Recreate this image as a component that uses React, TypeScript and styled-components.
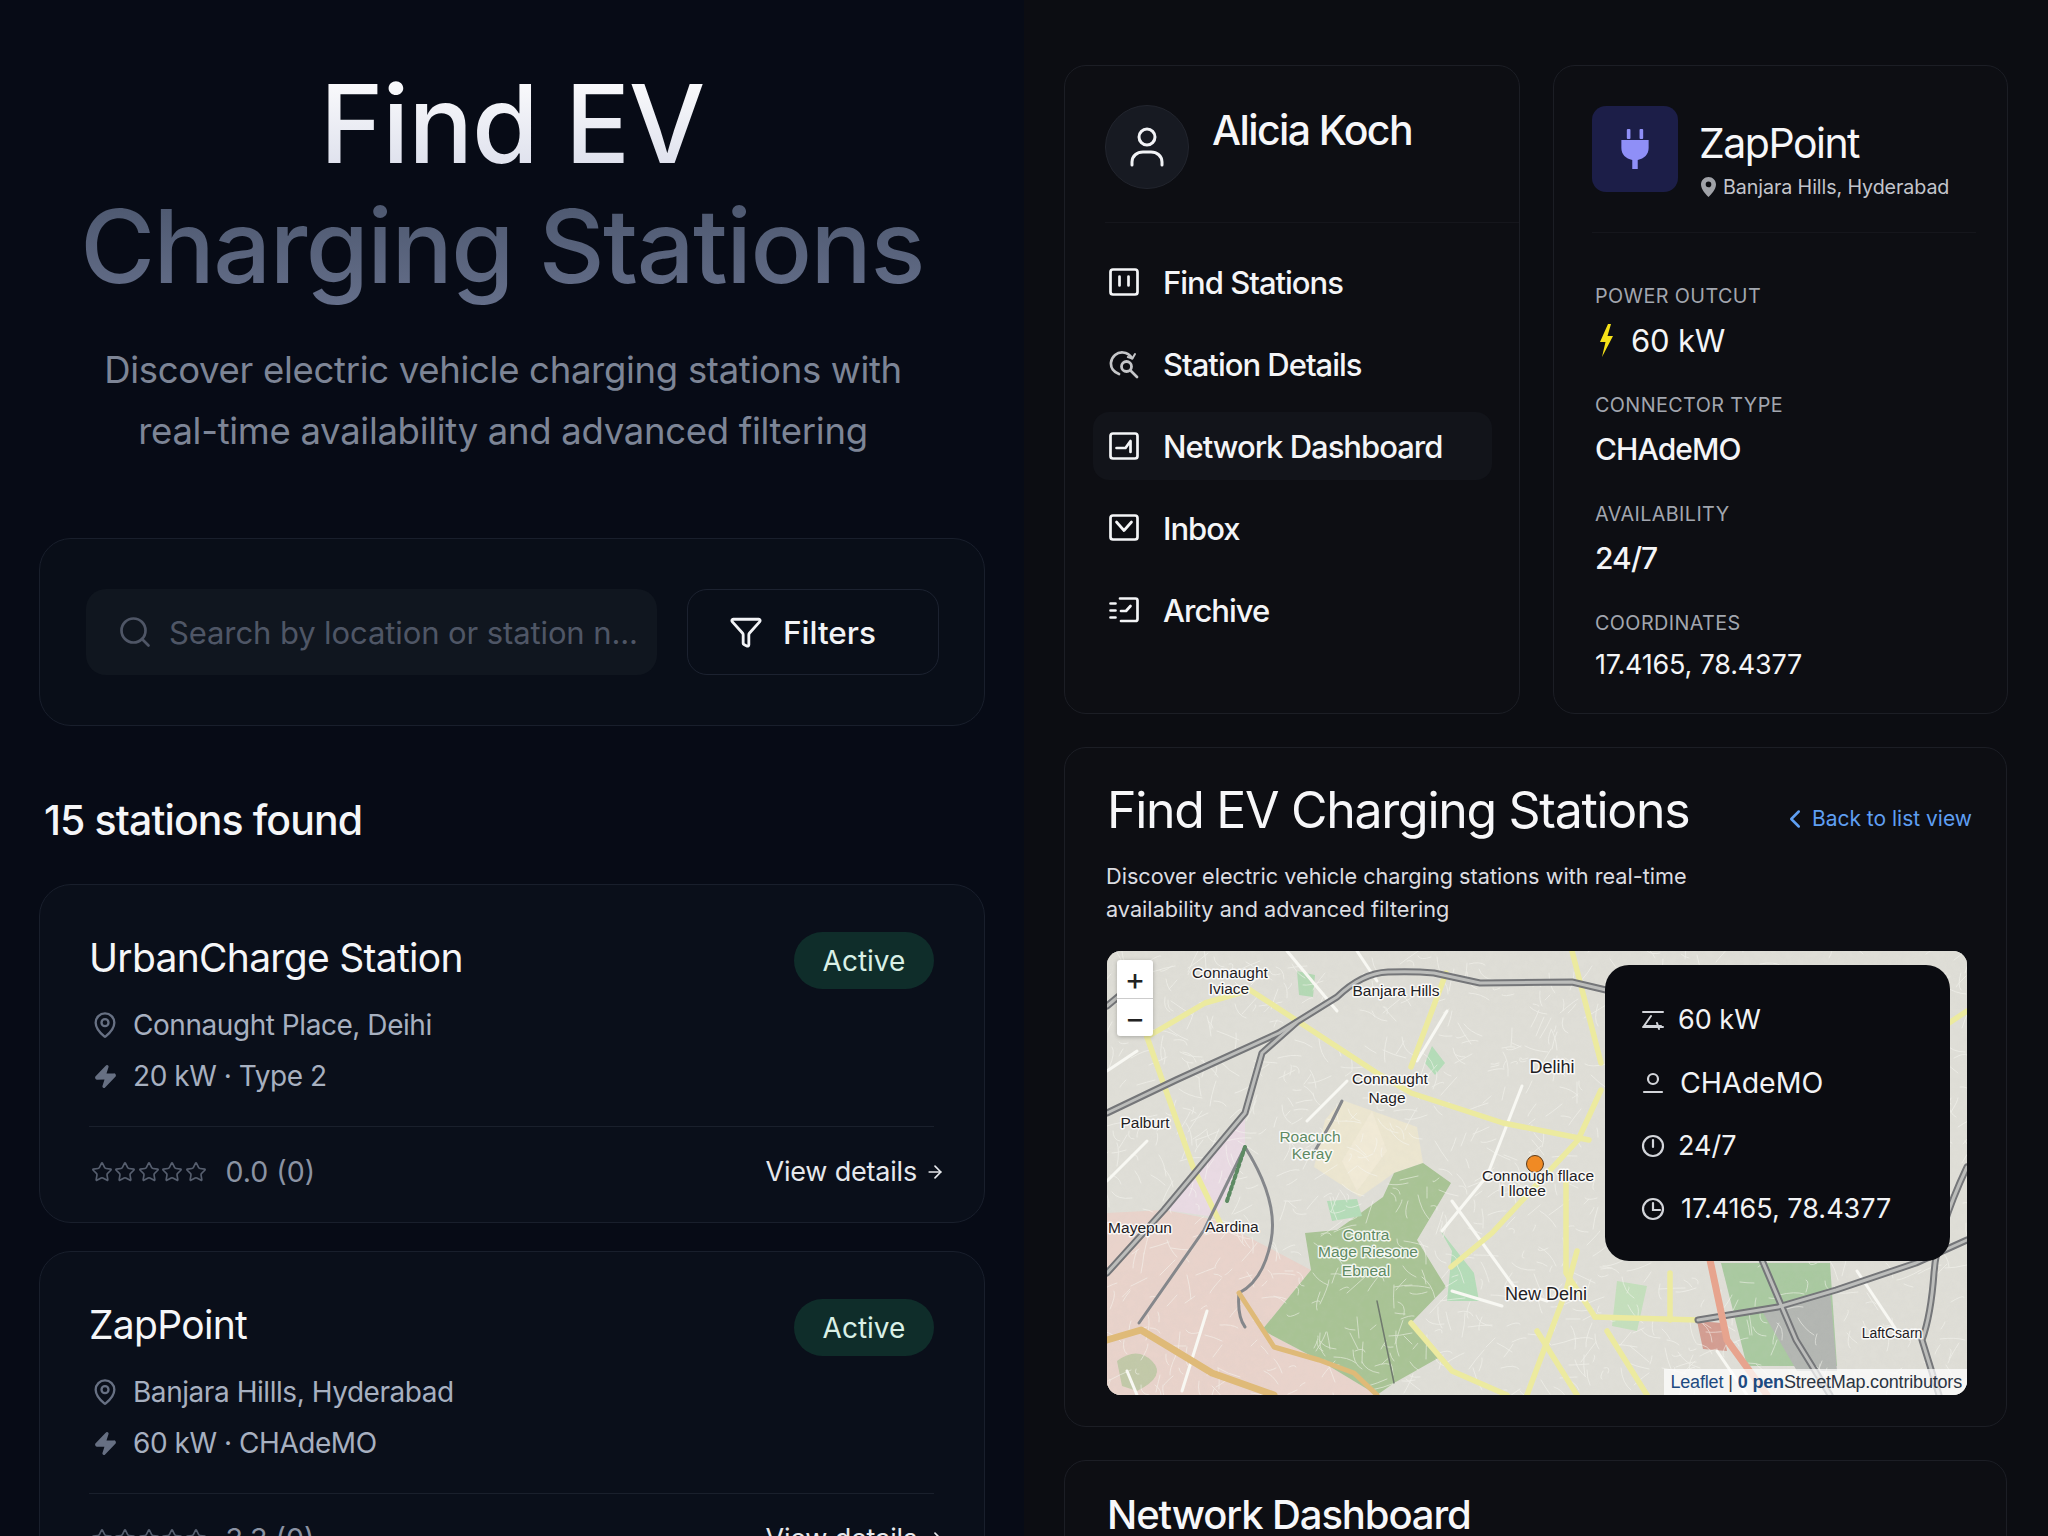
import React from 'react';
import styled, { createGlobalStyle } from 'styled-components';
import { Search, Funnel, MapPin, Zap, Star, ArrowRight, ChevronLeft } from 'lucide-react';

const GlobalStyle = createGlobalStyle`
  html, body {
    margin: 0;
    padding: 0;
    height: 1536px;
    overflow: hidden;
    background: #0c0d12;
    font-family: 'Inter', 'Liberation Sans', sans-serif;
  }
  * { box-sizing: border-box; }
`;

const Page = styled.div`
  display: grid;
  grid-template-columns: 1024px 1024px;
  height: 1536px;
  overflow: hidden;
`;

const LeftColumn = styled.main`
  background: #070b16;
  padding: 62px 39px 0;
  overflow: hidden;
`;

const RightColumn = styled.aside`
  background: #0c0d12;
  padding: 65px 41px 0 40px;
  display: flex;
  flex-direction: column;
  gap: 33px;
  overflow: hidden;
`;

const HeroTitle = styled.h1`
  margin: 0;
  text-align: center;
  font-size: 102px;
  line-height: 123px;
  font-weight: 500;
`;

const HeroLine = styled.span<{ $muted?: boolean }>`
  display: block;
  font-size: ${({ $muted }) => ($muted ? '1em' : '1.06em')};
  letter-spacing: ${({ $muted }) => ($muted ? '-0.015em' : '-0.012em')};
  margin-right: ${({ $muted }) => ($muted ? '20px' : '0')};
  background: ${({ $muted }) =>
    $muted
      ? 'linear-gradient(180deg, #4a556c, #656f8a)'
      : 'linear-gradient(180deg, #ffffff, #d9dcea)'};
  -webkit-background-clip: text;
  background-clip: text;
  color: transparent;
`;

const HeroText = styled.p`
  margin: 32px 0 76px;
  padding-right: 18px;
  text-align: center;
  font-size: 36.5px;
  line-height: 61px;
  letter-spacing: -0.3px;
  color: #7d8596;
`;

const SearchCard = styled.section`
  height: 188px;
  border: 1px solid #191f2c;
  border-radius: 32px;
  background: #090e18;
  padding: 50px 45px 50px 46px;
  display: flex;
  gap: 30px;
`;

const SearchBox = styled.div`
  flex: 1;
  height: 86px;
  border-radius: 20px;
  background: #10161f;
  display: flex;
  align-items: center;
  gap: 16px;
  padding-left: 31px;
  color: #4f5666;
  font-size: 31px;
  letter-spacing: -0.1px;
  white-space: nowrap;
`;

const FilterButton = styled.button`
  width: 252px;
  height: 86px;
  border: 1px solid #1c2230;
  border-radius: 20px;
  background: transparent;
  color: #f2f3f6;
  display: flex;
  align-items: center;
  gap: 20px;
  padding: 0 0 0 41px;
  font: 500 31.5px 'Inter', sans-serif;
`;

const CountTitle = styled.h2`
  margin: 68px 0 38px 5px;
  font-size: 41px;
  line-height: 52px;
  font-weight: 500;
  color: #f5f6f8;
  letter-spacing: -0.9px;
`;

const StationList = styled.div`
  display: flex;
  flex-direction: column;
  gap: 28px;
`;

const StationCard = styled.article`
  height: 339px;
  flex: none;
  border: 1px solid #191f2c;
  border-radius: 32px;
  background: #0a0f1a;
  padding: 47px 50px 0 49px;
`;

const StationHead = styled.div`
  display: flex;
  justify-content: space-between;
  align-items: flex-start;
  margin-bottom: 16px;
`;

const StationName = styled.h3`
  margin: 1px 0 0;
  font-size: 39px;
  line-height: 50px;
  font-weight: 400;
  color: #f5f6f8;
  letter-spacing: -0.7px;
`;

const Badge = styled.span`
  width: 140px;
  height: 57px;
  border-radius: 29px;
  background: #0f2d2a;
  color: #d9f0e6;
  display: flex;
  align-items: center;
  justify-content: center;
  font-size: 28px;
`;

const MetaRow = styled.div`
  display: flex;
  align-items: center;
  gap: 13px;
  height: 40px;
  margin-bottom: 11px;
  font-size: 28px;
  letter-spacing: -0.45px;
  color: #a7b0c0;
  padding-left: 1px;
`;

const MetaIcon = styled.span`
  width: 30px;
  flex: none;
  display: flex;
  justify-content: center;
  color: #677083;
`;

const CardFooter = styled.div`
  margin-top: 30px;
  border-top: 1px solid #1a202c;
  padding-top: 27px;
  display: flex;
  align-items: center;
  justify-content: space-between;
`;

const Rating = styled.div`
  display: flex;
  align-items: center;
  gap: 19px;
  font-size: 28.5px;
  color: #8b93a3;
  padding-left: 2px;
`;

const Stars = styled.div`
  display: flex;
  gap: 1.4px;
  color: #565e6e;
`;

const DetailsLink = styled.a`
  display: flex;
  align-items: center;
  gap: 8px;
  font-size: 27px;
  letter-spacing: -0.2px;
  color: #e6e8ec;
  margin-right: -11px;
`;

const Panel = styled.section`
  border: 1px solid #1c1e25;
  border-radius: 22px;
  background: #0d0e13;
`;

const TopRow = styled.div`
  display: grid;
  grid-template-columns: 456px 455px;
  gap: 33px;
  height: 649px;
  flex: none;
`;

const NavHeader = styled.div`
  display: flex;
  align-items: flex-start;
  gap: 23px;
  margin: 39px 0 0 40px;
  padding-bottom: 33px;
  border-bottom: 1px solid #15161c;
`;

const Avatar = styled.div`
  width: 84px;
  height: 84px;
  border-radius: 50%;
  background: #171a22;
  border: 1px solid #22252e;
  display: flex;
  align-items: center;
  justify-content: center;
  color: #f2f3f6;
`;

const UserName = styled.div`
  font-size: 41px;
  line-height: 50px;
  font-weight: 500;
  color: #f7f7f9;
  letter-spacing: -1.6px;
`;

const NavList = styled.nav`
  display: flex;
  flex-direction: column;
  gap: 14px;
  margin: 25px 27px 0 28px;
`;

const NavItem = styled.a<{ $active?: boolean }>`
  height: 68px;
  display: flex;
  align-items: center;
  gap: 23px;
  padding-left: 15px;
  border-radius: 16px;
  background: ${({ $active }) => ($active ? '#12141a' : 'transparent')};
  color: #f4f5f7;
  font-size: 31px;
  font-weight: 500;
  letter-spacing: -1px;
  white-space: nowrap;
`;

const ZapHeader = styled.div`
  display: flex;
  gap: 21px;
  height: 127px;
  margin: 40px 31px 0 38px;
  border-bottom: 1px solid #15161c;
`;

const PlugBox = styled.div`
  width: 86px;
  height: 86px;
  border-radius: 14px;
  background: #1c1e48;
  display: flex;
  align-items: center;
  justify-content: center;
`;

const ZapInfo = styled.div`
  padding-top: 11px;
`;

const ZapName = styled.div`
  font-size: 41px;
  line-height: 52px;
  color: #f7f7f9;
  letter-spacing: -1.5px;
`;

const ZapPlace = styled.div`
  display: flex;
  align-items: center;
  gap: 7px;
  margin: 4px 0 0 2px;
  font-size: 19.7px;
  line-height: 28px;
  letter-spacing: -0.1px;
  color: #c3c5cc;
  white-space: nowrap;
`;

const FieldList = styled.div`
  display: flex;
  flex-direction: column;
  gap: 32px;
  margin: 50px 0 0 41px;
`;

const FieldLabel = styled.div`
  font-size: 19.8px;
  line-height: 26px;
  letter-spacing: 0.02em;
  color: #a2a6af;
`;

const FieldValue = styled.div<{ $size?: number; $light?: boolean; $close?: boolean }>`
  display: flex;
  align-items: center;
  gap: 17px;
  margin-top: ${({ $close }) => ($close ? '8px' : '11px')};
  height: 40px;
  font-size: ${({ $size }) => $size ?? 30}px;
  font-weight: ${({ $light }) => ($light ? 400 : 500)};
  letter-spacing: ${({ $light }) => ($light ? '-0.2px' : '-0.9px')};
  color: #f4f5f7;
`;

const BoltSlot = styled.span`
  display: flex;
  margin-left: 4px;
`;

const MapPanel = styled(Panel)`
  height: 680px;
  flex: none;
  padding: 32px 39px 0 42px;
`;

const MapHead = styled.div`
  display: flex;
  justify-content: space-between;
  align-items: flex-end;
  height: 60px;
  margin-bottom: 20px;
`;

const PanelTitle = styled.h2`
  margin: 0;
  font-size: 50px;
  line-height: 60px;
  font-weight: 400;
  letter-spacing: -1.3px;
  color: #f7f7f9;
`;

const BackLink = styled.a`
  display: flex;
  align-items: center;
  gap: 2px;
  font-size: 21px;
  line-height: 34px;
  color: #5f9ff2;
  margin: 0 -5px 4px 0;
`;

const MapText = styled.p`
  margin: 0 0 25px -1px;
  font-size: 21.7px;
  line-height: 33px;
  color: #dcdde1;
`;

const MapFrame = styled.div`
  position: relative;
  width: 860px;
  height: 444px;
  border-radius: 14px;
  overflow: hidden;
  background: #dfded7;

  > svg { display: block; }
`;

const ZoomControl = styled.div`
  position: absolute;
  left: 10px;
  top: 9px;
  width: 36px;
  height: 76px;
  background: #fff;
  border-radius: 3px;
  display: flex;
  flex-direction: column;
  box-shadow: 0 1px 4px rgba(0, 0, 0, 0.25);
`;

const ZoomButton = styled.div`
  flex: 1;
  display: flex;
  align-items: center;
  justify-content: center;
  font-size: 31px;
  line-height: 1;
  color: #222;
  & + & { border-top: 1px solid #ccc; }
`;

const Attribution = styled.div`
  position: absolute;
  right: 0;
  bottom: 0;
  height: 26px;
  padding: 0 5px 0 6px;
  background: rgba(255, 255, 255, 0.72);
  display: flex;
  align-items: center;
  gap: 5px;
  font: 18px 'Liberation Sans', sans-serif;
  letter-spacing: -0.01em;
  color: #2b3442;
  white-space: nowrap;
`;

const AttrLink = styled.span<{ $bold?: boolean }>`
  color: #1d4a80;
  font-weight: ${({ $bold }) => ($bold ? 700 : 400)};
`;

const AttrRest = styled.span`
  margin-left: -5px;
`;

const InfoCard = styled.div`
  position: absolute;
  left: 498px;
  top: 14px;
  width: 345px;
  height: 296px;
  border-radius: 24px;
  background: #0b0c11;
  padding: 33px 0 0 36px;
  display: flex;
  flex-direction: column;
  gap: 20px;
`;

const InfoRow = styled.div<{ $size?: number; $gap?: number }>`
  display: flex;
  align-items: center;
  gap: ${({ $gap }) => $gap ?? 13}px;
  height: 43px;
  font-size: ${({ $size }) => $size ?? 27}px;
  color: #f2f3f5;

  svg { flex: none; color: #d3d5da; }
`;

const DashboardPanel = styled(Panel)`
  height: 200px;
  flex: none;
  padding: 24px 42px 0;
`;

const DashboardTitle = styled(PanelTitle)`
  font-size: 40px;
  font-weight: 500;
  letter-spacing: -1.1px;
`;

const MapLabel = styled.text<{ $park?: boolean }>`
  font-family: 'Liberation Sans', sans-serif;
  font-size: 15.5px;
  text-anchor: middle;
  fill: ${({ $park }) => ($park ? '#5f8a63' : '#1f2124')};
  stroke: rgba(255, 255, 255, 0.85);
  stroke-width: 3px;
  paint-order: stroke;
`;

const Ico = ({ children }: { children: React.ReactNode }) => (
  <svg width="32" height="32" viewBox="0 0 32 32" fill="none" stroke="currentColor" strokeWidth="2.7" strokeLinecap="round" strokeLinejoin="round">
    {children}
  </svg>
);

const FindIcon = () => (
  <Ico>
    <rect x="2.5" y="3.5" width="27" height="25" rx="2.5" />
    <path d="M11.5 10.5v9M20.5 10.5v9" />
  </Ico>
);

const DetailsIcon = () => (
  <Ico>
    <g opacity=".8">
      <path d="M11 26C5.5 24 2.5 19.5 3 14.5 3.8 8.5 9 4 15 4.5c4 .3 7 2.3 9 5.5" />
      <path d="M27 6l-2.6 4.6-4.6-1.6" strokeWidth="2" />
      <circle cx="18.5" cy="18.5" r="5" strokeWidth="2.8" />
      <path d="M22.5 22.5l6.5 6.5" />
    </g>
  </Ico>
);

const DashIcon = () => (
  <Ico>
    <rect x="2.5" y="3.5" width="27" height="25" rx="2.5" />
    <path d="M8.5 18h9l5-7v11" />
  </Ico>
);

const InboxIcon = () => (
  <Ico>
    <rect x="2.5" y="3.5" width="27" height="24" rx="2.5" />
    <path d="M8.5 10l7.5 8.5 7.5-8.5" />
  </Ico>
);

const ArchiveIcon = () => (
  <Ico>
    <path d="M12 4.5h15.5a2 2 0 0 1 2 2V25a2 2 0 0 1-2 2H13" />
    <path d="M2.5 9.5h5M2.5 16.5h5M2.5 23.5h5" />
    <path d="M13 17h5l4.5-5" />
  </Ico>
);

const UserIcon = () => (
  <svg width="38" height="42" viewBox="0 0 38 42" fill="none" stroke="currentColor" strokeWidth="3" strokeLinecap="round">
    <circle cx="19" cy="11" r="8" />
    <path d="M4 39v-3c0-6 5-10 11-10h8c6 0 11 4 11 10v3" />
  </svg>
);

const PlugIcon = () => (
  <svg width="32" height="40" viewBox="0 0 34 44" fill="#8f8ff7">
    <rect x="8" y="0" width="4" height="11" rx="1" />
    <rect x="22" y="0" width="4" height="11" rx="1" />
    <path d="M2 12h30v9c0 7-5 12-12 13v10h-6V34C7 33 2 28 2 21z" />
  </svg>
);

const SmallPin = () => (
  <svg width="15" height="20" viewBox="0 0 15 20">
    <path fillRule="evenodd" fill="#a0a2a8" d="M7.5 0C3.4 0 0 3.3 0 7.4 0 12.2 5 17.5 7.5 20 10 17.5 15 12.2 15 7.4 15 3.3 11.6 0 7.5 0zm0 4.6a2.8 2.8 0 1 1 0 5.6 2.8 2.8 0 0 1 0-5.6z" />
  </svg>
);

const YellowBolt = () => (
  <svg width="15" height="33" viewBox="0 0 15 33">
    <path fill="#f5e118" d="M9 0L1 18h5.5L3 33l11-21H8.5L12 0z" />
  </svg>
);

const GaugeIcon = () => (
  <svg width="24" height="24" viewBox="0 0 24 24" fill="none" stroke="currentColor" strokeWidth="2" strokeLinecap="round" strokeLinejoin="round">
    <path d="M2 4h20M10 8l-7 10h17M16 15l2 6M2 19h20" />
  </svg>
);

const ConnectorIcon = () => (
  <svg width="24" height="26" viewBox="0 0 24 26" fill="none" stroke="currentColor" strokeWidth="2.2" strokeLinecap="round">
    <circle cx="12" cy="9" r="5" />
    <path d="M3 22h18" />
  </svg>
);

const TickClockIcon = () => (
  <svg width="24" height="24" viewBox="0 0 24 24" fill="none" stroke="currentColor" strokeWidth="2.2" strokeLinecap="round">
    <circle cx="12" cy="12" r="10" />
    <path d="M12 6v7" />
  </svg>
);

const ClockIcon = () => (
  <svg width="24" height="24" viewBox="0 0 24 24" fill="none" stroke="currentColor" strokeWidth="2.2" strokeLinecap="round">
    <circle cx="12" cy="12" r="10" />
    <path d="M12 6v7h7" />
  </svg>
);

// scatter of small side streets so the map has the same busy grain as the tiles
const minorStreets = (() => {
  let seed = 41;
  const rnd = () => {
    seed = (seed * 16807) % 2147483647;
    return seed / 2147483647;
  };
  const out: string[] = [];
  for (let i = 0; i < 1100; i++) {
    const x = rnd() * 860;
    const y = rnd() * 444;
    const a = rnd() * Math.PI * 2;
    const l = 6 + rnd() * 20;
    const bend = (rnd() - 0.5) * 10;
    const x2 = x + Math.cos(a) * l;
    const y2 = y + Math.sin(a) * l;
    out.push(`M${x.toFixed(0)} ${y.toFixed(0)}Q${((x + x2) / 2 + bend).toFixed(0)} ${((y + y2) / 2 - bend).toFixed(0)} ${x2.toFixed(0)} ${y2.toFixed(0)}`);
  }
  return out;
})();

const highways = [
  'M0 162L69 129 172 82 230 46Q255 22 281 21T327 22L373 32 465 31 499 39',
  'M0 322L57 259 138 162 155 102 189 72',
  'M0 55L30 30',
  'M591 369L671 356 729 339 809 312 860 289',
  'M860 216Q830 280 827 322T815 389L832 444',
  'M655 309L689 389 723 444',
];

const thinGrey = [
  'M32 372L97 279 138 196',
  'M138 196Q172 250 164 290T132 342Q130 365 138 376',
  'M235 150L225 170 205 205',
];

const yellowRoads = [
  'M40 86L86 216 115 276',
  'M40 86L98 52 143 39',
  'M143 39L270 122 304 142 396 172 482 189',
  'M339 22L304 116',
  'M465 0L494 112',
  'M494 139L471 189 385 282 344 316',
  'M459 222L459 322 488 366',
  'M488 366L591 369',
  'M563 322V369',
  'M420 444L459 340 470 300',
  'M304 372L345 420 400 444',
  'M470 444L430 380',
  'M500 380L540 444',
  'M860 60L830 80',
];

const whiteRoads = [
  'M0 120L30 100',
  'M180 0L230 60',
  'M250 0L270 30',
  'M310 110L340 60',
  'M415 135L380 225 335 280',
  'M345 250L410 340 440 350',
  'M345 340L395 355',
  'M200 170L240 130',
  'M0 230L40 190',
  'M750 320L790 380',
  'M610 400L640 444',
  'M100 360L75 440',
  'M20 420L30 444',
];

const StationMap = () => (
  <svg width="860" height="444" viewBox="0 0 860 444" fill="none" strokeLinecap="round" strokeLinejoin="round">
    <defs>
      <filter id="tile-grain" x="0" y="0" width="100%" height="100%">
        <feTurbulence type="fractalNoise" baseFrequency="0.14" numOctaves="3" seed="7" />
        <feColorMatrix values="0 0 0 0 0.6  0 0 0 0 0.6  0 0 0 0 0.56  0.4 0 0 0 -0.12" />
      </filter>
      <filter id="tile-soft">
        <feGaussianBlur stdDeviation="0.7" />
      </filter>
    </defs>
    <rect width="860" height="444" fill="#dfded7" />
    <g filter="url(#tile-soft)">
      <path d="M138 162L57 259 109 266 138 206z" fill="#e9dae3" />
      <path d="M0 262L57 259 109 269 204 319 155 379 212 409 270 444H0z" fill="#e9d3cb" />
      <path d="M235 149L310 176 316 212 287 222 253 246 207 216 218 169z" fill="#ece6d0" />
      <path d="M316 212L344 232 310 289 339 336 304 372 333 406 287 432 270 444 212 409 155 379 204 319 198 282 230 279 276 246 287 222z" fill="#a8c394" />
      <path d="M333 279L367 322 372 350 340 350 345 300z" fill="#b4dcb8" />
      <path d="M190 20L208 24 206 46 192 44z" fill="#b4d9b4" />
      <path d="M325 95L338 112 328 124 318 112z" fill="#b4dcb8" />
      <path d="M220 250L250 248 255 265 225 270z" fill="#b4dcb8" />
      <path d="M510 330L540 335 530 380 505 375z" fill="#c4dfbc" />
      <path d="M614 312L723 312 730 415 640 415z" fill="#a9c9a0" />
      <path d="M655 360L723 340 730 420 690 420z" fill="#b3b6b2" />
      <path d="M590 370L615 372 620 400 596 398z" fill="#d39c90" />
      <path d="M10 410Q30 395 45 410T30 440L15 435z" fill="#c2c9a8" />
      <path d="M235 210L265 160 280 200 250 240z" fill="#f1ead6" />
    </g>
    <rect width="860" height="444" filter="url(#tile-grain)" opacity=".38" />
    <g stroke="#f6f6f1" strokeWidth=".9" opacity=".6">
      {minorStreets.map((d, i) => (
        <path key={i} d={d} />
      ))}
    </g>
    <g filter="url(#tile-soft)">
      <g stroke="#f8f8f3" strokeWidth="3">
        {whiteRoads.map((d) => (
          <path key={d} d={d} />
        ))}
      </g>
      <g>
        {yellowRoads.map((d) => (
          <path key={d} d={d} stroke="#ecea9f" strokeWidth="5.5" />
        ))}
      </g>
      <g stroke="#747679" strokeWidth="7">
        {highways.map((d) => (
          <path key={d} d={d} />
        ))}
      </g>
      <g stroke="#bcbdbb" strokeWidth="3">
        {highways.map((d) => (
          <path key={d} d={d} />
        ))}
      </g>
      <g stroke="#85878b" strokeWidth="3">
        {thinGrey.map((d) => (
          <path key={d} d={d} />
        ))}
      </g>
      <path d="M0 389L34 379 105 422 167 444" stroke="#dfba78" strokeWidth="7" />
      <path d="M132 342L167 396 212 409 247 422 270 444" stroke="#dfba78" strokeWidth="5" />
      <path d="M603 309L620 389 660 444" stroke="#e7a48e" strokeWidth="7" />
      <path d="M138 196L120 250" stroke="#5d8a63" strokeWidth="4" strokeDasharray="3 3" />
      <path d="M270 350L287 432" stroke="#6f7a6e" strokeWidth="1.5" />
    </g>

    <MapLabel x="123" y="27">Connaught</MapLabel>
    <MapLabel x="122" y="43">Iviace</MapLabel>
    <MapLabel x="289" y="45">Banjara Hills</MapLabel>
    <MapLabel x="445" y="122" style={{ fontSize: 18 }}>Delihi</MapLabel>
    <MapLabel x="283" y="133">Connaught</MapLabel>
    <MapLabel x="280" y="152">Nage</MapLabel>
    <MapLabel x="38" y="177">Palburt</MapLabel>
    <MapLabel $park x="203" y="191">Roacuch</MapLabel>
    <MapLabel $park x="205" y="208">Keray</MapLabel>
    <MapLabel x="33" y="282">Mayepun</MapLabel>
    <MapLabel x="125" y="281">Aardina</MapLabel>
    <MapLabel $park x="259" y="289">Contra</MapLabel>
    <MapLabel $park x="261" y="306">Mage Riesone</MapLabel>
    <MapLabel $park x="259" y="325">Ebneal</MapLabel>
    <circle cx="428" cy="213" r="8.5" fill="#f08a24" stroke="#5a3b1c" strokeWidth="1" />
    <MapLabel x="431" y="230">Connough fllace</MapLabel>
    <MapLabel x="416" y="245">I llotee</MapLabel>
    <MapLabel x="439" y="349" style={{ fontSize: 18 }}>New Delni</MapLabel>
    <MapLabel x="785" y="387" style={{ fontSize: 14 }}>LaftCsarn</MapLabel>
  </svg>
);

const stations = [
  { name: 'UrbanCharge Station', place: 'Connaught Place, Deihi', specs: '20 kW · Type 2', score: '0.0 (0)' },
  { name: 'ZapPoint', place: 'Banjara Hillls, Hyderabad', specs: '60 kW · CHAdeMO', score: '3.3 (0)' },
];

const navItems = [
  { label: 'Find Stations', icon: <FindIcon /> },
  { label: 'Station Details', icon: <DetailsIcon /> },
  { label: 'Network Dashboard', icon: <DashIcon />, active: true },
  { label: 'Inbox', icon: <InboxIcon /> },
  { label: 'Archive', icon: <ArchiveIcon /> },
];

export default function App() {
  return (
    <>
      <GlobalStyle />
      <Page>
        <LeftColumn>
          <HeroTitle>
            <HeroLine>Find EV</HeroLine>
            <HeroLine $muted>Charging Stations</HeroLine>
          </HeroTitle>
          <HeroText>
            Discover electric vehicle charging stations with
            <br />
            real-time availability and advanced filtering
          </HeroText>
          <SearchCard>
            <SearchBox>
              <Search size={36} strokeWidth={1.8} />
              Search by location or station n...
            </SearchBox>
            <FilterButton>
              <Funnel size={34} strokeWidth={2} />
              Filters
            </FilterButton>
          </SearchCard>
          <CountTitle>15 stations found</CountTitle>
          <StationList>
            {stations.map((s) => (
              <StationCard key={s.name}>
                <StationHead>
                  <StationName>{s.name}</StationName>
                  <Badge>Active</Badge>
                </StationHead>
                <MetaRow>
                  <MetaIcon>
                    <MapPin size={28} strokeWidth={2} />
                  </MetaIcon>
                  {s.place}
                </MetaRow>
                <MetaRow>
                  <MetaIcon>
                    <Zap size={25} fill="currentColor" />
                  </MetaIcon>
                  {s.specs}
                </MetaRow>
                <CardFooter>
                  <Rating>
                    <Stars>
                      {[0, 1, 2, 3, 4].map((n) => (
                        <Star key={n} size={22} strokeWidth={1.8} />
                      ))}
                    </Stars>
                    {s.score}
                  </Rating>
                  <DetailsLink>
                    View details
                    <ArrowRight size={20} strokeWidth={2} />
                  </DetailsLink>
                </CardFooter>
              </StationCard>
            ))}
          </StationList>
        </LeftColumn>
        <RightColumn>
          <TopRow>
            <Panel>
              <NavHeader>
                <Avatar>
                  <UserIcon />
                </Avatar>
                <UserName>Alicia Koch</UserName>
              </NavHeader>
              <NavList>
                {navItems.map((item) => (
                  <NavItem key={item.label} $active={item.active}>
                    {item.icon}
                    {item.label}
                  </NavItem>
                ))}
              </NavList>
            </Panel>
            <Panel>
              <ZapHeader>
                <PlugBox>
                  <PlugIcon />
                </PlugBox>
                <ZapInfo>
                  <ZapName>ZapPoint</ZapName>
                  <ZapPlace>
                    <SmallPin />
                    Banjara Hills, Hyderabad
                  </ZapPlace>
                </ZapInfo>
              </ZapHeader>
              <FieldList>
                <div>
                  <FieldLabel>POWER OUTCUT</FieldLabel>
                  <FieldValue $light $size={31}>
                    <BoltSlot>
                      <YellowBolt />
                    </BoltSlot>
                    60 kW
                  </FieldValue>
                </div>
                <div>
                  <FieldLabel>CONNECTOR TYPE</FieldLabel>
                  <FieldValue>CHAdeMO</FieldValue>
                </div>
                <div>
                  <FieldLabel>AVAILABILITY</FieldLabel>
                  <FieldValue>24/7</FieldValue>
                </div>
                <div>
                  <FieldLabel>COORDINATES</FieldLabel>
                  <FieldValue $light $close $size={27}>17.4165, 78.4377</FieldValue>
                </div>
              </FieldList>
            </Panel>
          </TopRow>
          <MapPanel>
            <MapHead>
              <PanelTitle>Find EV Charging Stations</PanelTitle>
              <BackLink>
                <ChevronLeft size={30} strokeWidth={2} />
                Back to list view
              </BackLink>
            </MapHead>
            <MapText>
              Discover electric vehicle charging stations with real-time
              <br />
              availability and advanced filtering
            </MapText>
            <MapFrame>
              <StationMap />
              <ZoomControl>
                <ZoomButton>+</ZoomButton>
                <ZoomButton>−</ZoomButton>
              </ZoomControl>
              <InfoCard>
                <InfoRow>
                  <GaugeIcon />
                  60 kW
                </InfoRow>
                <InfoRow $size={28.5} $gap={15}>
                  <ConnectorIcon />
                  CHAdeMO
                </InfoRow>
                <InfoRow>
                  <TickClockIcon />
                  24/7
                </InfoRow>
                <InfoRow $gap={16}>
                  <ClockIcon />
                  17.4165, 78.4377
                </InfoRow>
              </InfoCard>
              <Attribution>
                <AttrLink>Leaflet</AttrLink> | <AttrLink $bold>0 pen</AttrLink>
                <AttrRest>StreetMap.contributors</AttrRest>
              </Attribution>
            </MapFrame>
          </MapPanel>
          <DashboardPanel>
            <DashboardTitle>Network Dashboard</DashboardTitle>
          </DashboardPanel>
        </RightColumn>
      </Page>
    </>
  );
}
